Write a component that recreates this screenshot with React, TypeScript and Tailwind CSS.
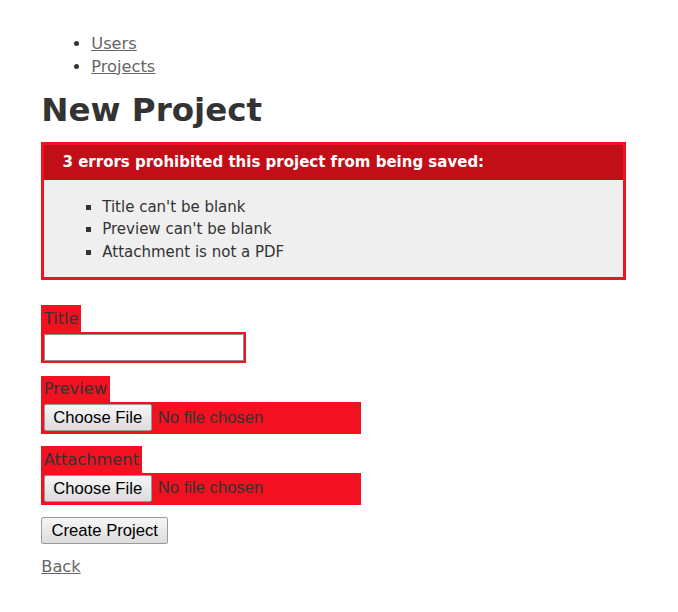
import React from "react";

const RED = "bg-[#f21120]";

function Label({ children }: { children: React.ReactNode }) {
  return (
    <div className="w-fit bg-[#f21120] px-[2.5px] py-[2.5px] leading-[21.25px] text-[16.25px] text-[#333]">
      <label>{children}</label>
    </div>
  );
}

function FileField() {
  return (
    <div className="flex h-[32px] w-[320px] items-center bg-[#f21120] px-[2.5px] py-[2.5px]">
      <button
        type="button"
        className="h-[27px] w-[108px] rounded-[2px] border border-[#9a9a9a] bg-gradient-to-b from-[#f6f6f6] to-[#dcdcdc] text-[16.67px] leading-[25px] text-black [font-family:'Liberation_Sans',Arial,sans-serif]"
      >
        Choose File
      </button>
      <span className="ml-[6px] text-[16.67px] text-[#333] [font-family:'Liberation_Sans',Arial,sans-serif]">
        No file chosen
      </span>
    </div>
  );
}

export default function App() {
  return (
    <div className="min-h-[612px] bg-white px-[41.25px] pt-[33px] text-[16.25px] leading-[22.5px] text-[#333] [font-family:'DejaVu_Sans',Verdana,sans-serif]">
      <ul className="list-disc pl-[50px]">
        <li>
          <a href="#" className="text-[#666] underline">Users</a>
        </li>
        <li>
          <a href="#" className="text-[#666] underline">Projects</a>
        </li>
      </ul>
      <h1 className="mt-[20.5px] mb-[21px] text-[32.5px] font-bold leading-[22.5px] text-[#333]">
        New Project
      </h1>

      <div className="mb-[25px] w-[585px] border-[3px] border-[#f21120] bg-[#efefef] px-[8px] pt-[8px]">
        <h2 className="-mx-[8px] -mt-[8px] bg-[#c20e17] py-[6px] pr-[6.25px] pl-[18.25px] text-[15px] font-bold leading-[22.5px] text-white">
          3 errors prohibited this project from being saved:
        </h2>
        <ul className="mt-[16.25px] mb-[14px] list-[square] pl-[50px] text-[15px] leading-[22.5px]">
          <li>Title can't be blank</li>
          <li>Preview can't be blank</li>
          <li>Attachment is not a PDF</li>
        </ul>
      </div>

      <form className="flex flex-col">
        <div>
          <Label>Title</Label>
          <div className={`w-fit ${RED} p-[2.5px]`}>
            <input
              type="text"
              className="block h-[26.5px] w-[200px] border border-[#8f8f8f] bg-white"
            />
          </div>
        </div>
        <div className="mt-[12.5px]">
          <Label>Preview</Label>
          <FileField />
        </div>
        <div className="mt-[12.5px]">
          <Label>Attachment</Label>
          <FileField />
        </div>
        <div className="mt-[12px]">
          <button
            type="button"
            className="h-[27px] w-[127px] rounded-[2px] border border-[#9a9a9a] bg-gradient-to-b from-[#f6f6f6] to-[#dcdcdc] text-[16.67px] leading-[25px] text-black [font-family:'Liberation_Sans',Arial,sans-serif]"
          >
            Create Project
          </button>
        </div>
      </form>
      <div className="mt-[12.75px]">
        <a href="#" className="text-[#666] underline">Back</a>
      </div>
    </div>
  );
}
